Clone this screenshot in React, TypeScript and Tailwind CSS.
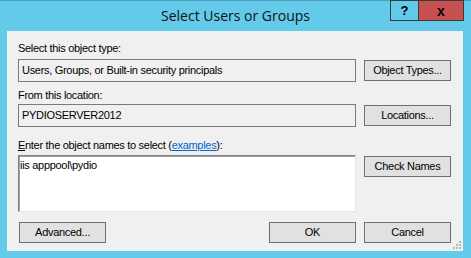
import React from "react";

const ui = "font-['Liberation_Sans',Arial,sans-serif] text-[11px] leading-[13px] tracking-[-0.3px] text-black";

function Btn({ children, className = "" }: { children: React.ReactNode; className?: string }) {
  return (
    <button
      className={`h-[21px] w-[87px] shrink-0 border border-[#707070] bg-[#e1e1e1] ${ui} flex items-center justify-center ${className}`}
    >
      {children}
    </button>
  );
}

export default function App() {
  return (
    <div className="flex h-[258px] w-[471px] flex-col overflow-hidden bg-[#63caea]">
      {/* Title bar */}
      <div className="relative flex h-[31px] shrink-0 items-center justify-center border-t border-[#4a9fc0]">
        <span className="font-['Open_Sans',sans-serif] text-[14px] leading-[20px] text-[#111]">
          Select Users or Groups
        </span>
        <div className="absolute right-[7px] top-[-1px] flex h-[21px]">
          <div className="flex w-[28px] items-center justify-center border border-r-0 border-[#3a3a3a] bg-[#63caea] font-['Liberation_Sans',sans-serif] text-[13px] font-bold">
            ?
          </div>
          <div className="flex w-[46px] items-center justify-center border border-[#3a3a3a] bg-[#c75050] font-['Liberation_Sans',sans-serif] text-[14px] font-bold leading-none">
            x
          </div>
        </div>
      </div>

      {/* Dialog body */}
      <div className="relative mx-[7px] flex h-[220px] w-[456px] flex-col bg-[#f0f0f0] pl-[11px] pr-[12px] pt-[11px]">
        <div className={ui}>Select this object type:</div>
        <div className="mt-[4px] flex gap-[8px]">
          <div className={`flex h-[23px] w-[338px] items-center border border-[#7a7a7a] px-[3px] ${ui}`}>
            Users, Groups, or Built-in security principals
          </div>
          <Btn className="mt-[1px]">Object Types...</Btn>
        </div>

        <div className={`mt-[7px] ${ui}`}>From this location:</div>
        <div className="mt-[2px] flex gap-[8px]">
          <div className={`flex h-[23px] w-[338px] items-center border border-[#7a7a7a] px-[3px] ${ui}`}>
            PYDIOSERVER2012
          </div>
          <Btn className="mt-[1px]">Locations...</Btn>
        </div>

        <div className={`mt-[12px] ${ui}`}>
          <span className="underline">E</span>nter the object names to select (
          <span className="text-[#0066cc] underline">examples</span>):
        </div>
        <div className="mt-[3px] flex gap-[8px]">
          <div
            className={`h-[57px] w-[338px] border border-b-[#e3e3e3] border-l-[#828282] border-r-[#e3e3e3] border-t-[#828282] bg-white px-[1px] pt-[3px] shadow-[inset_1px_1px_0_#a0a0a0] ${ui}`}
          >
            iis apppool\pydio
          </div>
          <Btn className="mt-[1px]">Check Names</Btn>
        </div>

        <div className="mt-[10px] flex">
          <Btn className="ml-[1px]">Advanced...</Btn>
          <div className="ml-auto flex gap-[8px]">
            <Btn className="w-[73px]">OK</Btn>
            <Btn className="w-[73px]">Cancel</Btn>
          </div>
        </div>

        {/* size grip */}
        <svg className="absolute bottom-[2px] right-[2px]" width="8" height="8" viewBox="0 0 8 8">
          {[
            [6, 0],
            [3, 3],
            [6, 3],
            [0, 6],
            [3, 6],
            [6, 6],
          ].map(([x, y]) => (
            <rect key={`${x}-${y}`} x={x} y={y} width="2" height="2" fill="#b8b8b8" />
          ))}
        </svg>
      </div>
    </div>
  );
}
